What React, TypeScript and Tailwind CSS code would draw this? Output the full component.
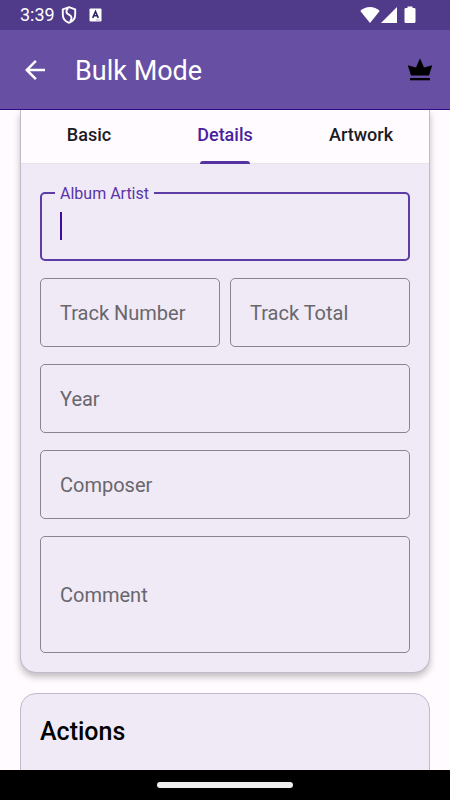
import { useState } from "react";

const tabs = ["Basic", "Details", "Artwork"];

const ShieldIcon = () => (
  <svg width="16" height="18" viewBox="0 0 16 18" fill="none" stroke="#fff" strokeWidth="1.9">
    <path d="M8 1.2 L14.2 3.4 V8.5 C14.2 12.6 11.6 15.5 8 16.8 C4.4 15.5 1.8 12.6 1.8 8.5 V3.4 Z" />
    <path d="M7.2 2 C4 5.5 5.5 7.3 8 8.7 C11 10.4 11.4 12.4 9 15.8" />
  </svg>
);

const BadgeIcon = () => (
  <svg width="13" height="14" viewBox="0 0 13 14">
    <rect x="0.5" y="0.5" width="12" height="13" rx="1" fill="#fff" />
    <path d="M3.7 10 L6.5 3.5 L9.3 10 M4.7 7.8 H8.3" fill="none" stroke="#2c2260" strokeWidth="1.6" />
    <path d="M7 12 h4" stroke="#9a93b5" strokeWidth="0.7" />
  </svg>
);

const StatusIcons = () => (
  <svg width="56" height="18" viewBox="0 0 56 18" fill="#fff">
    <path d="M0.3 5 C5.5 -0.3 14.5 -0.3 19.7 5 L10 17 Z" />
    <path d="M21 17 L37 1 V17 Z" />
    <path d="M47.5 0.5 h5 v1.5 h1.7 q1.3 0 1.3 1.3 v12.4 q0 1.3 -1.3 1.3 h-8.4 q-1.3 0 -1.3 -1.3 v-12.4 q0 -1.3 1.3 -1.3 h1.7 z" />
  </svg>
);

const BackIcon = () => (
  <svg width="30" height="30" viewBox="0 0 24 24" fill="#fff">
    <path d="M20 11H7.83l5.59-5.59L12 4l-8 8 8 8 1.41-1.41L7.83 13H20v-2z" />
  </svg>
);

const CrownIcon = () => (
  <svg width="26" height="24" viewBox="0 0 26 24" fill="#000">
    <path d="M4 17.5 L0.7 7.3 L9 9.5 L13 0.3 L17 9.5 L25.3 7.3 L22 17.5 Z" />
    <rect x="3" y="20" width="20" height="2.3" />
  </svg>
);

type FieldProps = {
  id: string;
  label: string;
  multiline?: boolean;
};

const Field = ({ id, label, multiline }: FieldProps) => {
  const [value, setValue] = useState("");
  const box =
    "block w-full rounded-[5px] border border-[#8a8490] bg-transparent px-5 text-xl text-[#1c1b1f] outline-none";

  return (
    <div className="relative min-w-0 flex-1">
      {multiline ? (
        <textarea
          id={id}
          value={value}
          onChange={(e) => setValue(e.target.value)}
          className={`${box} h-[117px] resize-none py-4`}
        />
      ) : (
        <input
          id={id}
          type="text"
          value={value}
          onChange={(e) => setValue(e.target.value)}
          className={`${box} h-[69px]`}
        />
      )}
      {!value && (
        <label
          htmlFor={id}
          className="pointer-events-none absolute inset-0 flex items-center px-5 text-xl text-[#69666d]"
        >
          {label}
        </label>
      )}
    </div>
  );
};

const AlbumArtistField = () => {
  const [value, setValue] = useState("");

  return (
    <div className="relative">
      <input
        id="album-artist"
        type="text"
        value={value}
        onChange={(e) => setValue(e.target.value)}
        className="block h-[69px] w-full rounded-[5px] border-2 border-[#5b3da5] bg-transparent px-[18px] text-xl text-[#1c1b1f] caret-[#3f0f9c] outline-none"
      />
      <label
        htmlFor="album-artist"
        className="absolute -top-2 left-[15px] bg-[#efeaf5] px-[5px] text-base leading-5 text-[#5a34a8]"
      >
        Album Artist
      </label>
      {!value && (
        <span className="pointer-events-none absolute top-5 left-5 h-7 w-0.5 bg-[#3f0f9c]" />
      )}
    </div>
  );
};

const App = () => {
  const [active, setActive] = useState("Details");

  return (
    <div className="flex h-screen flex-col overflow-hidden bg-[#fffbff] font-[Roboto,sans-serif]">
      <div className="flex h-[30px] shrink-0 items-center bg-[#4f3b8a] pr-[34px] pl-5 text-white">
        <span className="text-lg leading-none">3:39</span>
        <span className="ml-1.5">
          <ShieldIcon />
        </span>
        <span className="ml-3">
          <BadgeIcon />
        </span>
        <span className="ml-auto">
          <StatusIcons />
        </span>
      </div>

      <header className="flex h-20 shrink-0 items-center border-b border-[#2e0a86] bg-[#6750a4] pr-[17px] pl-5">
        <button type="button" aria-label="Back">
          <BackIcon />
        </button>
        <h1 className="ml-[25px] pt-1 text-[27px] text-white">Bulk Mode</h1>
        <button type="button" aria-label="Premium" className="ml-auto">
          <CrownIcon />
        </button>
      </header>

      <main className="min-h-0 flex-1 overflow-hidden px-5">
        <section className="rounded-b-2xl border border-t-0 border-[#c0bac9] bg-[#efeaf5] shadow-[0_4px_7px_rgba(0,0,0,0.25)]">
          <div role="tablist" className="flex h-[54px] border-b border-[#e6e1ea] bg-[#fffbff]">
            {tabs.map((tab) => (
              <button
                key={tab}
                type="button"
                role="tab"
                aria-selected={active === tab}
                onClick={() => setActive(tab)}
                className={`relative flex-1 basis-0 pb-1 text-lg font-medium ${
                  active === tab ? "text-[#4a1fa0]" : "text-[#1c1b1f]"
                }`}
              >
                {tab}
                {active === tab && (
                  <span className="absolute -bottom-px left-1/2 h-[3px] w-[50px] -translate-x-1/2 rounded-t-[3px] bg-[#5432a0]" />
                )}
              </button>
            ))}
          </div>

          <form className="flex flex-col gap-[17px] px-[19px] pt-7 pb-[19px]">
            <AlbumArtistField />
            <div className="flex gap-2.5">
              <Field id="track-number" label="Track Number" />
              <Field id="track-total" label="Track Total" />
            </div>
            <Field id="year" label="Year" />
            <Field id="composer" label="Composer" />
            <Field id="comment" label="Comment" multiline />
          </form>
        </section>

        <section className="mt-5 h-40 rounded-2xl border border-[#c0bac9] bg-[#efeaf5] px-[19px] pt-[19px]">
          <h2 className="text-[25px] font-medium text-black">Actions</h2>
        </section>
      </main>

      <footer className="flex h-[30px] shrink-0 items-center justify-center bg-black">
        <span className="h-1.5 w-[136px] rounded-full bg-[#eeeeee]" />
      </footer>
    </div>
  );
};

export default App;
